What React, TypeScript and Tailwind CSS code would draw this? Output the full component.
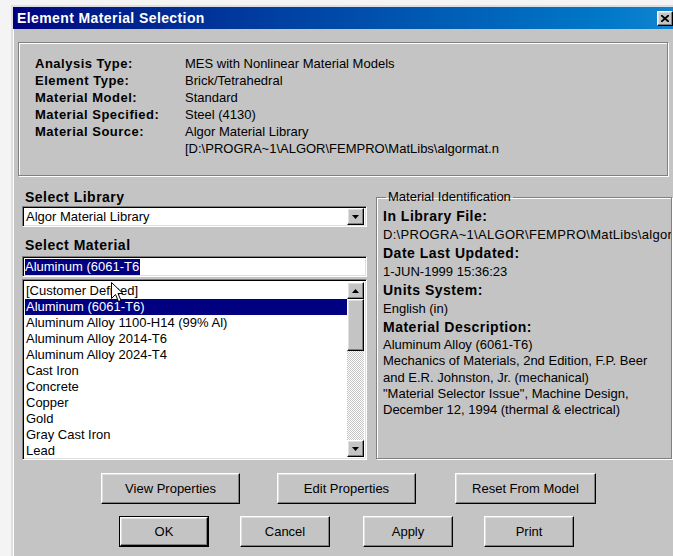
import type { ReactNode } from "react";

// classic 3D edges
const raised =
  "border border-t-white border-l-white border-r-black border-b-black shadow-[inset_-1px_-1px_0_#808080,inset_1px_1px_0_#dfdfdf]";
const sunken =
  "border border-t-[#808080] border-l-[#808080] border-r-white border-b-white shadow-[inset_1px_1px_0_#000,inset_-1px_-1px_0_#dfdfdf]";
const etched = "border border-[#808080] shadow-[inset_1px_1px_0_#fff,1px_1px_0_#fff]";

const info: [string, string[]][] = [
  ["Analysis Type:", ["MES with Nonlinear Material Models"]],
  ["Element Type:", ["Brick/Tetrahedral"]],
  ["Material Model:", ["Standard"]],
  ["Material Specified:", ["Steel (4130)"]],
  ["Material Source:", ["Algor Material Library", "[D:\\PROGRA~1\\ALGOR\\FEMPRO\\MatLibs\\algormat.n"]],
];

const materials = [
  "[Customer Defined]",
  "Aluminum (6061-T6)",
  "Aluminum Alloy 1100-H14 (99% Al)",
  "Aluminum Alloy 2014-T6",
  "Aluminum Alloy 2024-T4",
  "Cast Iron",
  "Concrete",
  "Copper",
  "Gold",
  "Gray Cast Iron",
  "Lead",
];

const description = [
  "Aluminum Alloy (6061-T6)",
  "Mechanics of Materials, 2nd Edition, F.P. Beer",
  "and E.R. Johnston, Jr. (mechanical)",
  "\"Material Selector Issue\", Machine Design,",
  "December 12, 1994 (thermal & electrical)",
];

function Arrow({ up }: { up?: boolean }) {
  return (
    <svg width="7" height="4" viewBox="0 0 7 4">
      <path d={up ? "M3.5 0 L7 4 L0 4 Z" : "M0 0 L7 0 L3.5 4 Z"} fill="#000" />
    </svg>
  );
}

function ArrowButton({ up }: { up?: boolean }) {
  return (
    <div className={`${raised} w-[17px] h-[17px] bg-[#c4c4c4] flex items-center justify-center shrink-0`}>
      <Arrow up={up} />
    </div>
  );
}

function Button({ children, width, isDefault }: { children: ReactNode; width: string; isDefault?: boolean }) {
  const face = (
    <div className={`${raised} h-full flex items-center justify-center bg-[#c4c4c4] text-[13px]`}>{children}</div>
  );
  if (isDefault) {
    return <div className={`${width} h-[31px] border border-black`}>{face}</div>;
  }
  return <div className={`${width} h-[31px]`}>{face}</div>;
}

export default function App() {
  return (
    <div className="w-[673px] h-[556px] overflow-hidden bg-[#f4f4f4] pl-[11px] pt-[5px] font-['Liberation_Sans',Arial,sans-serif] text-black">
      <div className="w-[662px] h-[560px] bg-[#c4c4c4] border-t-2 border-l-2 border-t-[#dfdfdf] border-l-[#dfdfdf] shadow-[inset_1px_1px_0_#fff]">
        {/* caption */}
        <div className="h-[22px] bg-linear-to-r from-[#000080] to-[#1084d0] flex items-center justify-between pl-[4px]">
          <span className="text-white font-bold text-[14px] tracking-[0.4px]">Element Material Selection</span>
          <div className={`${raised} w-[16px] h-[15px] bg-[#c4c4c4] flex items-center justify-center`}>
            <svg width="8" height="7" viewBox="0 0 8 7">
              <path d="M0 0 L8 7 M8 0 L0 7" stroke="#000" strokeWidth="1.8" />
            </svg>
          </div>
        </div>

        {/* summary */}
        <div className={`${etched} ml-[5px] mt-[13px] w-[650px] h-[134px] pl-[16px] pt-[12px]`}>
          <div className="grid grid-cols-[150px_1fr] text-[13px] leading-[17px]">
            {info.map(([label, values]) => (
              <div key={label} className="contents">
                <div className="font-bold tracking-[0.5px]">{label}</div>
                <div>
                  {values.map((v) => (
                    <div key={v}>{v}</div>
                  ))}
                </div>
              </div>
            ))}
          </div>
        </div>

        <div className="flex mt-[13px]">
          {/* library / material pickers */}
          <div className="ml-[9px] w-[345px] shrink-0 flex flex-col">
            <div className="pl-[3px] h-[16px] leading-[16px] text-[14px] font-bold tracking-[0.5px]">Select Library</div>
            <div className={`${sunken} mt-[1px] h-[21px] bg-white flex items-center p-[2px]`}>
              <span className="flex-1 pl-[1px] text-[13px] leading-[16px]">Algor Material Library</span>
              <ArrowButton />
            </div>
            <div className="mt-[10px] pl-[3px] h-[16px] leading-[16px] text-[14px] font-bold tracking-[0.5px]">
              Select Material
            </div>
            <div className={`${sunken} mt-[3px] h-[21px] bg-white flex items-center px-[2px]`}>
              <span className="bg-[#000080] text-white text-[13px] leading-[16px] pr-[1px]">Aluminum (6061-T6</span>
            </div>
            <div className={`${sunken} relative mt-[2px] h-[181px] bg-white flex p-[2px]`}>
              <div className="flex-1 pt-[1px] text-[13px] leading-[16px]">
                {materials.map((m, i) => (
                  <div key={m} className={`pl-[1px] h-[16px] ${i === 1 ? "bg-[#000080] text-white" : ""}`}>
                    {m}
                  </div>
                ))}
              </div>
              <div className="w-[17px] flex flex-col">
                <ArrowButton up />
                <div className="flex-1 flex flex-col bg-[repeating-conic-gradient(#fff_0_25%,#c4c4c4_0_50%)] bg-[length:2px_2px]">
                  <div className={`${raised} h-[52px] bg-[#c4c4c4]`} />
                </div>
                <ArrowButton />
              </div>
              {/* mouse pointer */}
              <svg className="absolute left-[88px] top-[2px]" width="13" height="21" viewBox="0 0 13 21">
                <path
                  d="M0.5 0.5 L0.5 16.5 L4.5 12.5 L7.5 19.5 L10 18.5 L7 11.5 L12 11.5 Z"
                  fill="#fff"
                  stroke="#000"
                  strokeWidth="1"
                />
              </svg>
            </div>
          </div>

          {/* identification group */}
          <fieldset
            className={`${etched} ml-[9px] mt-[1px] w-[296px] min-w-0 shrink-0 h-[269px] pl-[6px] pt-0 overflow-hidden`}
          >
            <legend className="ml-[3px] px-[2px] text-[13px] leading-[14px]">Material Identification</legend>
            <div className="text-[13px] leading-[18.5px] whitespace-nowrap mt-[3px]">
              <div className="font-bold text-[14px] tracking-[0.5px]">In Library File:</div>
              <div className="tracking-[0.3px]">D:\PROGRA~1\ALGOR\FEMPRO\MatLibs\algormat.mat</div>
              <div className="font-bold text-[14px] tracking-[0.5px]">Date Last Updated:</div>
              <div>1-JUN-1999 15:36:23</div>
              <div className="font-bold text-[14px] tracking-[0.5px]">Units System:</div>
              <div>English (in)</div>
              <div className="font-bold text-[14px] tracking-[0.5px] h-[19px]">Material Description:</div>
              <div className="leading-[16.3px]">
                {description.map((d) => (
                  <div key={d}>{d}</div>
                ))}
              </div>
            </div>
          </fieldset>
        </div>

        {/* command buttons */}
        <div className="flex mt-[13px] pl-[88px]">
          <Button width="w-[139px]">View Properties</Button>
          <div className="ml-[37px]">
            <Button width="w-[139px]">Edit Properties</Button>
          </div>
          <div className="ml-[39px]">
            <Button width="w-[141px]">Reset From Model</Button>
          </div>
        </div>
        <div className="flex mt-[12px] pl-[106px]">
          <Button width="w-[90px]" isDefault>
            OK
          </Button>
          <div className="ml-[31px]">
            <Button width="w-[90px]">Cancel</Button>
          </div>
          <div className="ml-[33px]">
            <Button width="w-[90px]">Apply</Button>
          </div>
          <div className="ml-[31px]">
            <Button width="w-[90px]">Print</Button>
          </div>
        </div>
      </div>
    </div>
  );
}
